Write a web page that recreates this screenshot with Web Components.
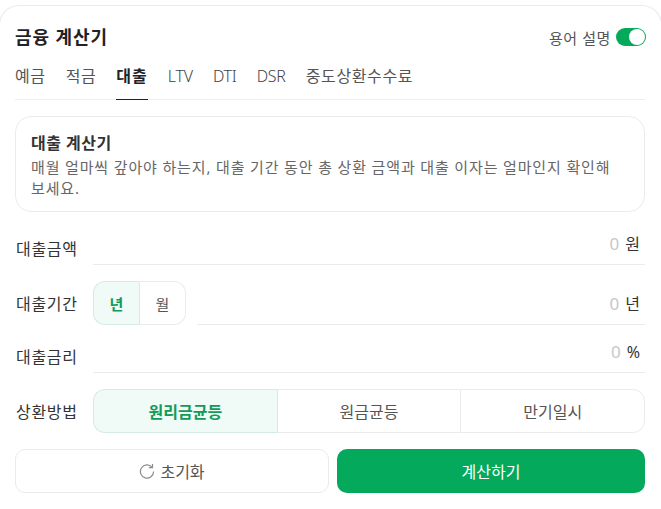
<!DOCTYPE html>
<html lang="ko">
<head>
<meta charset="utf-8">
<style>
  html, body { margin: 0; background: #fff; }
  body {
    height: 509px;
    overflow: hidden;
    font-family: "Noto Sans", "Noto Sans CJK KR", sans-serif;
    color: #333;
  }
</style>
</head>
<body>
<calc-card>
  <calc-header slot="header" title="금융 계산기"></calc-header>
  <calc-tabs slot="tabs"></calc-tabs>
  <info-box title="대출 계산기">매월 얼마씩 갚아야 하는지, 대출 기간 동안 총 상환 금액과 대출 이자는 얼마인지 확인해 보세요.</info-box>
  <field-row label="대출금액" h="33" lift="1"><amount-input unit="원"></amount-input></field-row>
  <field-row label="대출기간" h="44">
    <seg-group options="년,월" wide="false"></seg-group>
    <amount-input unit="년" style="margin-left:11px"></amount-input>
  </field-row>
  <field-row label="대출금리" h="32" lift="1"><amount-input unit="%"></amount-input></field-row>
  <field-row label="상환방법" h="44"><seg-group options="원리금균등,원금균등,만기일시" wide="true"></seg-group></field-row>
  <calc-actions></calc-actions>
</calc-card>

<script>
class CalcCard extends HTMLElement {
  constructor() {
    super();
    this.attachShadow({ mode: 'open' }).innerHTML = `
    <style>
      :host { display: block; margin: 5px -1px 0; }
      .card {
        border: 1px solid #e9ebee;
        border-bottom: 0;
        border-radius: 20px 20px 0 0;
        padding: 16px 16px 0 15px;
      }
      .body { display: flex; flex-direction: column; gap: 16px; }
    </style>
    <div class="card">
      <slot name="header"></slot>
      <slot name="tabs"></slot>
      <div class="body"><slot></slot></div>
    </div>`;
  }
}

class CalcHeader extends HTMLElement {
  constructor() {
    super();
    this.attachShadow({ mode: 'open' }).innerHTML = `
    <style>
      :host { display: flex; justify-content: space-between; align-items: center; height: 30px; }
      h1 { margin: 0; font-size: 18px; line-height: 28px; font-weight: 700; color: #1f2328; letter-spacing: .9px; }
      .term { display: flex; align-items: center; gap: 5px; font-size: 15px; letter-spacing: .6px; color: #555; margin-right: -1px; }
      .switch { width: 30px; height: 18px; border-radius: 9px; background: #05a95c; position: relative; }
      .switch i { position: absolute; right: 1px; top: 1px; width: 16px; height: 16px; border-radius: 50%; background: #fff; }
    </style>
    <h1>${this.getAttribute('title')}</h1>
    <div class="term">용어 설명<span class="switch"><i></i></span></div>`;
  }
}

class CalcTabs extends HTMLElement {
  constructor() {
    super();
    const tabs = ['예금', '적금', '대출', 'LTV', 'DTI', 'DSR', '중도상환수수료'];
    this.attachShadow({ mode: 'open' }).innerHTML = `
    <style>
      :host { display: flex; gap: 20px; height: 39px; margin: 8px 0 16px; border-bottom: 1px solid #eceef0; }
      span { font-size: 16px; line-height: 24px; letter-spacing: .6px; color: #555; padding: 4px 0 0; height: 35px; }
      .lat { letter-spacing: -.2px; font-weight: 300; color: #3f4246; }
      .on { color: #1f2328; font-weight: 700; letter-spacing: 1px; border-bottom: 1px solid #1f2328; }
    </style>
    ${tabs.map(t => `<span class="${t === '대출' ? 'on' : /[A-Z]/.test(t) ? 'lat' : ''}">${t}</span>`).join('')}`;
  }
}

class InfoBox extends HTMLElement {
  constructor() {
    super();
    this.attachShadow({ mode: 'open' }).innerHTML = `
    <style>
      :host {
        display: block;
        border: 1px solid #e9ebee;
        border-radius: 16px;
        padding: 15px 15px 12px;
        margin-bottom: 4px;
      }
      strong { display: block; font-size: 16px; line-height: 22px; letter-spacing: .5px; color: #333; }
      p { margin: 3px 0 0; font-size: 15px; line-height: 21px; letter-spacing: .85px; color: #666; word-break: keep-all; }
    </style>
    <strong>${this.getAttribute('title')}</strong>
    <p><slot></slot></p>`;
  }
}

class FieldRow extends HTMLElement {
  constructor() {
    super();
    const lift = this.getAttribute('lift') || 0;
    this.attachShadow({ mode: 'open' }).innerHTML = `
    <style>
      :host { display: flex; align-items: center; height: ${this.getAttribute('h')}px; }
      label { width: 77px; padding: 0 0 ${lift * 2}px 1px; flex: none; font-size: 16px; letter-spacing: .7px; color: #333; }
      .ctl { flex: 1; display: flex; height: 100%; min-width: 0; }
    </style>
    <label>${this.getAttribute('label')}</label>
    <div class="ctl"><slot></slot></div>`;
  }
}

class AmountInput extends HTMLElement {
  constructor() {
    super();
    this.attachShadow({ mode: 'open' }).innerHTML = `
    <style>
      :host {
        display: flex; flex: 1; justify-content: flex-end; align-items: flex-end;
        gap: 6px; border-bottom: 1px solid #e9ebee; padding: 0 5px 9px 0;
        font-size: 16px; line-height: 22px; color: #333;
      }
      .zero { color: #c4c7ca; font-size: 17px; }
    </style>
    <span class="zero">0</span><span>${this.getAttribute('unit')}</span>`;
  }
}

class SegGroup extends HTMLElement {
  constructor() {
    super();
    const wide = this.getAttribute('wide') === 'true';
    const options = this.getAttribute('options').split(',');
    this.attachShadow({ mode: 'open' }).innerHTML = `
    <style>
      :host {
        display: flex; height: 44px;
        ${wide ? 'flex: 1;' : 'flex: none; width: 93px;'}
        font-size: ${wide ? 16 : 15}px; color: #555;
      }
      div {
        flex: 1 1 0; display: flex; align-items: center; justify-content: center;
        border: 1px solid #e9ebee; border-right: 0;
      }
      div:first-of-type { border-radius: 12px 0 0 12px; }
      div:last-of-type { border-right: 1px solid #e9ebee; border-radius: 0 12px 12px 0; }
      .on { background: #f0faf6; color: #119a5c; font-weight: 700; }
      div.on { border-color: #d6ebe2; }
      div.on + div { border-left-color: #d6ebe2; }
    </style>
    ${options.map((o, i) => `<div class="${i === 0 ? 'on' : ''}">${o}</div>`).join('')}`;
  }
}

class CalcActions extends HTMLElement {
  constructor() {
    super();
    this.attachShadow({ mode: 'open' }).innerHTML = `
    <style>
      :host { display: grid; grid-template-columns: 314px 1fr; gap: 8px; height: 44px; }
      button {
        font: inherit; font-size: 16px; border-radius: 10px; cursor: pointer;
        display: flex; align-items: center; justify-content: center; gap: 5px;
      }
      .reset { background: #fff; border: 1px solid #e9ebee; color: #555; }
      .go { background: #05a95c; border: 0; color: #fff; }
    </style>
    <button class="reset">
      <svg width="16" height="16" viewBox="0 0 16 16" fill="none" stroke="#8a8d90" stroke-width="1.2">
        <path d="M13 4.2A6.6 6.6 0 1 0 14.6 8.4"/>
        <path d="M13.5 1v3.6H9.9"/>
      </svg>초기화</button>
    <button class="go">계산하기</button>`;
  }
}

customElements.define('calc-card', CalcCard);
customElements.define('calc-header', CalcHeader);
customElements.define('calc-tabs', CalcTabs);
customElements.define('info-box', InfoBox);
customElements.define('field-row', FieldRow);
customElements.define('amount-input', AmountInput);
customElements.define('seg-group', SegGroup);
customElements.define('calc-actions', CalcActions);
</script>
</body>
</html>
